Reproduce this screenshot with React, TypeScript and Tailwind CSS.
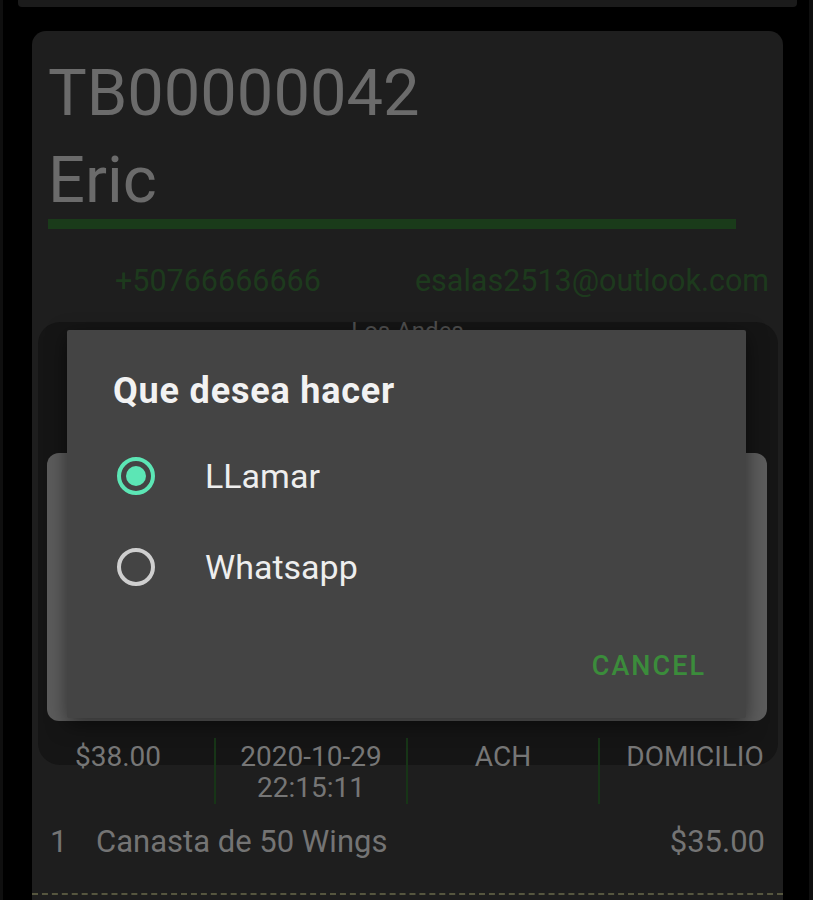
import { useState } from "react";

const options = ["LLamar", "Whatsapp"];

function Radio({ checked }: { checked: boolean }) {
  return (
    <span
      className={`flex h-[38px] w-[38px] items-center justify-center rounded-full border-[4px] ${
        checked ? "border-[#5ce6b5]" : "border-[#cfcfcf]"
      }`}
    >
      {checked && <span className="h-[20px] w-[20px] rounded-full bg-[#5ce6b5]" />}
    </span>
  );
}

export default function App() {
  const [selected, setSelected] = useState(0);

  return (
    <div className="h-[900px] w-[813px] overflow-hidden border-l-[3px] border-r-[4px] border-[#0f0f0f] bg-black font-['Roboto',sans-serif]">
      {/* top strip */}
      <div className="ml-[15px] h-[7px] w-[779px] rounded-b-[4px] bg-[#1b1b1b]" />

      {/* order card */}
      <div className="relative isolate ml-[29px] mt-[24px] h-[900px] w-[751px] rounded-[14px] bg-[#1e1e1e] pl-[16px] pt-[24px]">
        {/* darker inner card behind the dialog */}
        <div className="absolute left-[6px] top-[291px] -z-10 h-[443px] w-[740px] rounded-[22px] bg-[#151515]" />

        <div className="text-[65px] leading-[77px] text-[#6b6b6b]">TB00000042</div>
        <div className="mt-[10px] text-[65px] leading-[77px] text-[#6b6b6b]">Eric</div>
        <div className="h-[10px] w-[688px] bg-[#1a3b1a]" />

        <div className="mt-[34px] flex text-[30.5px] leading-[36px] text-[#1d3a1d]">
          <span className="ml-[67px]">+50766666666</span>
          <span className="ml-[94px]">esalas2513@outlook.com</span>
        </div>

        <div className="mt-[18px] pr-[16px] text-center text-[24px] leading-[28px] text-[#4f4f4f]">Los Andes</div>

        <div className="ml-[-1px] mt-[108px] h-[268px] w-[720px] rounded-[12px] bg-[#5c5c5c]" />

        {/* summary columns */}
        <div className="ml-[-26px] mt-[17px] grid w-[768px] grid-cols-4 text-center text-[28px] leading-[31px] text-[#767676]">
          <div className="h-[66px] pt-[3px]">$38.00</div>
          <div className="h-[66px] border-l-2 border-[#173517] pt-[3px]">
            2020-10-29
            <br />
            22:15:11
          </div>
          <div className="h-[66px] border-l-2 border-[#173517] pt-[3px]">ACH</div>
          <div className="h-[66px] border-l-2 border-[#173517] pt-[3px]">DOMICILIO</div>
        </div>

        <div className="mt-[20px] flex items-center pr-[18px] text-[31px] leading-[35px] text-[#747474]">
          <span className="ml-[2px] w-[46px]">1</span>
          <span className="flex-1">Canasta de 50 Wings</span>
          <span>$35.00</span>
        </div>

        <div className="ml-[-16px] mt-[34px] w-[751px] border-t-2 border-dashed border-[#56563f]" />

        {/* dialog */}
        <div className="absolute left-[35px] top-[299px] z-10 flex h-[388px] w-[679px] flex-col rounded-[2px] bg-[#444444] shadow-[0_6px_20px_rgba(0,0,0,0.5)]">
          <div className="pl-[46px] pt-[42px] text-[36px] font-bold leading-[38px] tracking-[0.8px] text-[#f2f2f2]">
            Que desea hacer
          </div>
          <div className="mt-[20px] flex flex-col">
            {options.map((label, i) => (
              <button
                key={label}
                onClick={() => setSelected(i)}
                className="flex h-[91px] items-center pl-[50px] text-left"
              >
                <Radio checked={selected === i} />
                <span className="ml-[50px] text-[34px] leading-[40px] text-[#eeeeee]">{label}</span>
              </button>
            ))}
          </div>
          <div className="mt-auto flex justify-end pb-[36px] pr-[40px]">
            <button className="text-[27px] font-medium leading-[32px] tracking-[2px] text-[#3b8c3b]">CANCEL</button>
          </div>
        </div>
      </div>
    </div>
  );
}
